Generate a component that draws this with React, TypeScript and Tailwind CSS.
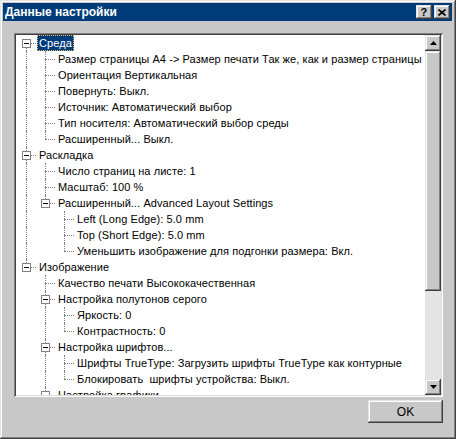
import React from 'react';

interface TreeNode {
    label: string;
    selected?: boolean;
    children?: TreeNode[];
}

interface Row {
    label: string;
    depth: number;
    guides: boolean[];
    hasNext: boolean;
    hasChildren: boolean;
    firstRoot: boolean;
    selected: boolean;
}

const tree: TreeNode[] = [
    {
        label: 'Среда',
        selected: true,
        children: [
            { label: 'Размер страницы A4 -> Размер печати Так же, как и размер страницы' },
            { label: 'Ориентация Вертикальная' },
            { label: 'Повернуть: Выкл.' },
            { label: 'Источник: Автоматический выбор' },
            { label: 'Тип носителя: Автоматический выбор среды' },
            { label: 'Расширенный... Выкл.' },
        ],
    },
    {
        label: 'Раскладка',
        children: [
            { label: 'Число страниц на листе: 1' },
            { label: 'Масштаб: 100 %' },
            {
                label: 'Расширенный... Advanced Layout Settings',
                children: [
                    { label: 'Left (Long Edge): 5.0 mm' },
                    { label: 'Top (Short Edge): 5.0 mm' },
                    { label: 'Уменьшить изображение для подгонки размера: Вкл.' },
                ],
            },
        ],
    },
    {
        label: 'Изображение',
        children: [
            { label: 'Качество печати Высококачественная' },
            {
                label: 'Настройка полутонов серого',
                children: [{ label: 'Яркость: 0' }, { label: 'Контрастность: 0' }],
            },
            {
                label: 'Настройка шрифтов...',
                children: [
                    { label: 'Шрифты TrueType: Загрузить шрифты TrueType как контурные' },
                    { label: 'Блокировать  шрифты устройства: Выкл.' },
                ],
            },
            { label: 'Настройка графики...', children: [] },
        ],
    },
];

function flatten(nodes: TreeNode[], depth: number, guides: boolean[], out: Row[]) {
    nodes.forEach((n, i) => {
        const hasNext = i < nodes.length - 1;
        out.push({
            label: n.label,
            depth,
            guides,
            hasNext,
            hasChildren: !!n.children,
            firstRoot: depth === 0 && i === 0,
            selected: !!n.selected,
        });
        if (n.children) flatten(n.children, depth + 1, [...guides, hasNext], out);
    });
    return out;
}

const rows = flatten(tree, 0, [], []);

const raised =
    'shadow-[inset_-1px_-1px_#404040,inset_1px_1px_#e4e4e4,inset_-2px_-2px_#808080,inset_2px_2px_#ffffff]';

function TreeRow({ row }: { row: Row }) {
    return (
        <div className="flex h-4 items-center whitespace-pre">
            {row.guides.map((g, i) => (
                <div key={i} className="relative h-full w-[19px] shrink-0">
                    {g && <div className="absolute left-[9px] top-0 h-full border-l border-dotted border-[#808080]" />}
                </div>
            ))}
            <div className="relative h-full w-[19px] shrink-0">
                {!row.firstRoot && <div className="absolute left-[9px] top-0 h-2 border-l border-dotted border-[#808080]" />}
                {row.hasNext && <div className="absolute left-[9px] top-2 h-2 border-l border-dotted border-[#808080]" />}
                <div className="absolute left-[9px] top-2 w-[10px] border-t border-dotted border-[#808080]" />
                {row.hasChildren && (
                    <div className="absolute left-[5px] top-[4px] flex h-[9px] w-[9px] items-center justify-center border border-[#808080] bg-white">
                        <div className="h-px w-[5px] bg-black" />
                    </div>
                )}
            </div>
            <span
                className={
                    row.selected
                        ? 'ml-[1px] h-4 bg-[#003c7a] px-[2px] leading-4 text-white outline-1 outline-dotted outline-offset-[-1px] outline-[#e0c060]'
                        : 'ml-[1px] px-[2px] leading-4 text-black'
                }
            >
                {row.label}
            </span>
        </div>
    );
}

function Arrow({ down }: { down?: boolean }) {
    return (
        <svg width="7" height="4" viewBox="0 0 7 4" className={down ? 'rotate-180' : ''}>
            <path d="M3.5 0 L7 4 L0 4 Z" fill="#000" />
        </svg>
    );
}

export default function App() {
    return (
        <div
            className={`flex h-[439px] w-[456px] flex-col bg-[#c8c8c8] p-[3px] pr-[4px] font-['Liberation_Sans',Arial,sans-serif] text-[11px] tracking-[0.08px] ${raised}`}
        >
            <div className="flex h-[18px] shrink-0 items-center justify-between bg-[#003c7a] pl-[2px] pr-[2px]">
                <span className="text-[12px] font-bold tracking-normal text-white">Данные настройки</span>
                <div className="flex gap-[2px]">
                    <div className={`flex h-[14px] w-4 items-center justify-center bg-[#c8c8c8] text-[11px] font-bold leading-none text-black ${raised}`}>
                        ?
                    </div>
                    <div className={`flex h-[14px] w-4 items-center justify-center bg-[#c8c8c8] ${raised}`}>
                        <svg width="8" height="7" viewBox="0 0 8 7">
                            <path d="M0.5 0.5 L7.5 6.5 M7.5 0.5 L0.5 6.5" stroke="#000" strokeWidth="1.6" />
                        </svg>
                    </div>
                </div>
            </div>

            <div className="ml-[11px] mt-[12px] flex h-[364px] w-[429px] shrink-0 p-[2px] shadow-[inset_1px_1px_#808080,inset_-1px_-1px_#ffffff,inset_2px_2px_#404040,inset_-2px_-2px_#dcdcdc]">
                <div className="flex-1 overflow-hidden bg-white pl-[1px]">
                    {rows.map((r, i) => (
                        <TreeRow key={i} row={r} />
                    ))}
                </div>
                <div className="flex w-4 shrink-0 flex-col">
                    <div className={`flex h-4 items-center justify-center bg-[#c8c8c8] ${raised}`}>
                        <Arrow />
                    </div>
                    <div className={`h-[240px] bg-[#c8c8c8] ${raised}`} />
                    <div className="flex-1 bg-[#e4e4e4]" />
                    <div className={`flex h-4 items-center justify-center bg-[#c8c8c8] ${raised}`}>
                        <Arrow down />
                    </div>
                </div>
            </div>

            <div className="mt-[3px] flex pr-[9px]">
                <button
                    className={`ml-auto flex h-[23px] w-[75px] items-center justify-center bg-[#c8c8c8] text-[12px] text-black ${raised}`}
                >
                    OK
                </button>
            </div>
        </div>
    );
}
